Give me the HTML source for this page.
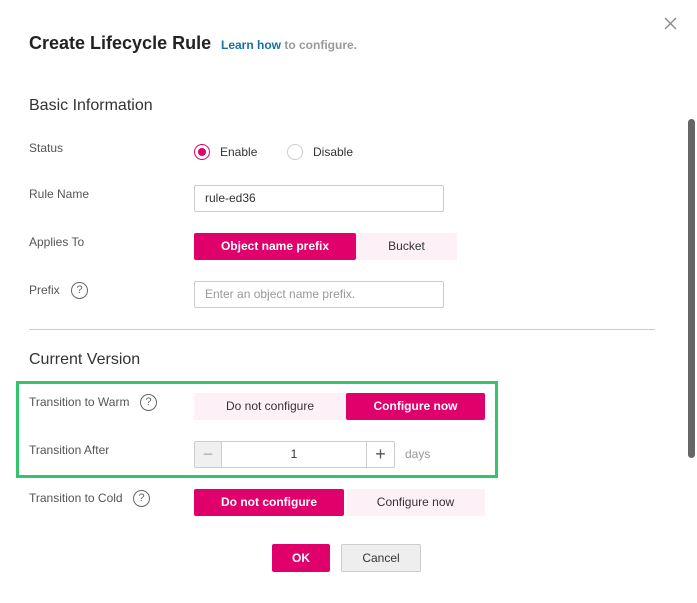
<!DOCTYPE html><html><head><style>
*{margin:0;padding:0;box-sizing:border-box}
body{width:697px;height:603px;background:#fff;position:relative;overflow:hidden;font-family:"Liberation Sans",sans-serif;color:#333}
.a{position:absolute;white-space:nowrap}
.lbl{font-size:12px;color:#555}
.q{position:absolute;width:17px;height:17px;border:1.3px solid #666;border-radius:50%;font-size:11px;color:#666;text-align:center;line-height:15px}
.btn{position:absolute;height:27px;font-size:12px;text-align:center;line-height:27px}
.on{background:#e0006c;color:#fff;font-weight:bold;border-radius:2px}
.off{background:#fdf0f6;color:#333}
.inp{position:absolute;height:27px;border:1px solid #ccc;border-radius:2px;font-size:12px;line-height:25px;padding-left:10px}
</style></head><body>
<div class="a" style="left:29px;top:33px;font-size:18px;font-weight:bold;color:#222">Create Lifecycle Rule</div>
<div class="a" style="left:221px;top:38px;font-size:12px;font-weight:bold;color:#999"><span style="color:#1a6fa8">Learn how</span> to configure.</div>
<svg class="a" style="left:664px;top:17px" width="13" height="13" viewBox="0 0 13 13"><path d="M1 1L12 12M12 1L1 12" stroke="#888" stroke-width="1.3"/></svg>
<div class="a" style="left:688px;top:119px;width:7px;height:339px;background:#666;border-radius:4px"></div>

<div class="a" style="left:29px;top:97px;font-size:16px;color:#333">Basic Information</div>
<div class="a lbl" style="left:29px;top:141px">Status</div>
<div class="a" style="left:194px;top:144px;width:16px;height:16px;border:1px solid #e0006c;border-radius:50%"><div style="margin:3px;width:8px;height:8px;border-radius:50%;background:#e0006c"></div></div>
<div class="a" style="left:220px;top:145px;font-size:12px">Enable</div>
<div class="a" style="left:287px;top:144px;width:16px;height:16px;border:1px solid #ccc;border-radius:50%"></div>
<div class="a" style="left:313px;top:145px;font-size:12px">Disable</div>

<div class="a lbl" style="left:29px;top:187px">Rule Name</div>
<div class="inp" style="left:194px;top:185px;width:250px;color:#333">rule-ed36</div>

<div class="a lbl" style="left:29px;top:235px">Applies To</div>
<div class="btn on" style="left:194px;top:233px;width:162px">Object name prefix</div>
<div class="btn off" style="left:356px;top:233px;width:101px">Bucket</div>

<div class="a lbl" style="left:29px;top:283px">Prefix</div>
<div class="q" style="left:71px;top:282px">?</div>
<div class="inp" style="left:194px;top:281px;width:250px;color:#999">Enter an object name prefix.</div>

<div class="a" style="left:29px;top:329px;width:626px;height:1px;background:#ccc"></div>
<div class="a" style="left:29px;top:351px;font-size:16px;color:#333">Current Version</div>

<div class="a" style="left:16px;top:381px;width:482px;height:97px;border:3px solid #33c46c"></div>
<div class="a lbl" style="left:29px;top:395px">Transition to Warm</div>
<div class="q" style="left:140px;top:394px">?</div>
<div class="btn off" style="left:194px;top:393px;width:152px">Do not configure</div>
<div class="btn on" style="left:346px;top:393px;width:139px">Configure now</div>

<div class="a lbl" style="left:29px;top:443px">Transition After</div>
<div class="a" style="left:194px;top:441px;width:201px;height:27px;border:1px solid #ccc;border-radius:2px"></div>
<div class="a" style="left:195px;top:442px;width:27px;height:25px;background:#f0f0f0;border-right:1px solid #ccc;color:#aaa;text-align:center;line-height:24px;font-size:18px">−</div>
<div class="a" style="left:222px;top:447px;width:144px;text-align:center;font-size:12px">1</div>
<div class="a" style="left:366px;top:442px;width:28px;height:25px;border-left:1px solid #ccc;color:#555;text-align:center;line-height:24px;font-size:18px">+</div>
<div class="a" style="left:405px;top:447px;font-size:12px;color:#999">days</div>

<div class="a lbl" style="left:29px;top:491px">Transition to Cold</div>
<div class="q" style="left:133px;top:490px">?</div>
<div class="btn on" style="left:194px;top:489px;width:150px">Do not configure</div>
<div class="btn off" style="left:346px;top:489px;width:139px">Configure now</div>

<div class="btn on" style="left:272px;top:544px;width:58px;height:28px;line-height:28px">OK</div>
<div class="btn" style="left:341px;top:544px;width:80px;height:28px;line-height:26px;background:#eee;border:1px solid #ccc;border-radius:2px">Cancel</div>
</body></html>
